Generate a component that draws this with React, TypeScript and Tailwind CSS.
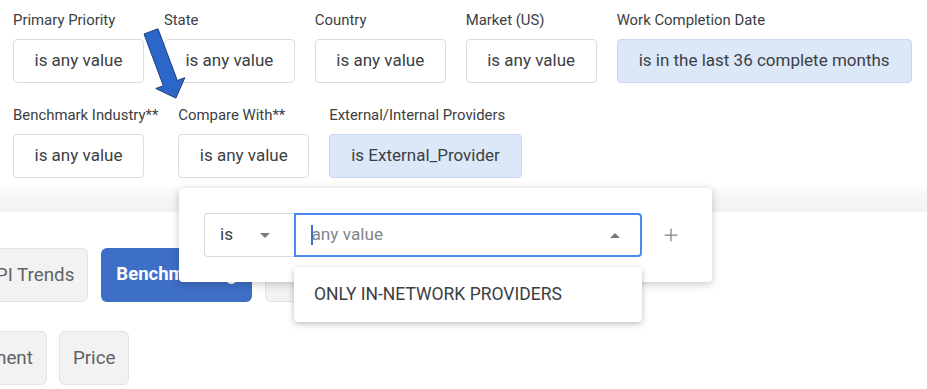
import { Plus } from 'lucide-react'

interface FilterProps {
  label: string
  value: string
  active?: boolean
}

function Filter({ label, value, active = false }: FilterProps): JSX.Element {
  return (
    <div className="flex flex-col items-start">
      <div className="text-[14.9px] leading-[20px] text-[#3c4043] whitespace-nowrap">{label}</div>
      <div
        className={
          active
            ? 'mt-[9px] h-[44px] px-[21px] flex items-center rounded-[4px] border border-[#c8d6ee] bg-[#dce7f8] text-[17px] text-[#3c4043] whitespace-nowrap'
            : 'mt-[9px] h-[44px] px-[20.5px] flex items-center rounded-[4px] border border-[#dadce0] bg-white text-[17px] text-[#3c4043] whitespace-nowrap'
        }
      >
        {value}
      </div>
    </div>
  )
}

function TabButton({ children, active = false }: { children: string; active?: boolean }): JSX.Element {
  return (
    <div
      className={
        active
          ? 'h-[54px] px-[15px] flex items-center rounded-[6px] bg-[#3d6fc7] text-white font-bold text-[18.5px] whitespace-nowrap'
          : 'h-[54px] px-[13px] flex items-center rounded-[6px] border border-[#e2e2e2] bg-[#f2f2f2] text-[#5f6368] text-[18.8px] whitespace-nowrap'
      }
    >
      {children}
    </div>
  )
}

function Caret({ up = false }: { up?: boolean }): JSX.Element {
  return (
    <svg width="10" height="5" viewBox="0 0 10 5">
      {up ? <polygon points="0,5 10,5 5,0" fill="#7a7a7a" /> : <polygon points="0,0 10,0 5,5" fill="#7a7a7a" />}
    </svg>
  )
}

export default function App(): JSX.Element {
  return (
    <div className="relative w-[927px] h-[389px] overflow-hidden bg-white font-[Roboto,sans-serif]">
      {/* filters */}
      <div className="h-[187px] px-[13px] pt-[10px]">
        <div className="flex gap-5">
          <Filter label="Primary Priority" value="is any value" />
          <Filter label="State" value="is any value" />
          <Filter label="Country" value="is any value" />
          <Filter label="Market (US)" value="is any value" />
          <Filter label="Work Completion Date" value="is in the last 36 complete months" active />
        </div>
        <div className="flex gap-5 mt-[22px]">
          <Filter label="Benchmark Industry**" value="is any value" />
          <Filter label="Compare With**" value="is any value" />
          <Filter label="External/Internal Providers" value="is External_Provider" active />
        </div>
      </div>
      <div className="h-[25px] bg-gradient-to-b from-[#fbfbfb] to-[#f1f1f1]" />

      {/* tabs */}
      <div className="pt-[36px]">
        <div className="flex gap-[13px] ml-[-30px]">
          <TabButton>KPI Trends</TabButton>
          <TabButton active>Benchmarking</TabButton>
          <TabButton>Comparison</TabButton>
        </div>
        <div className="flex gap-[12px] ml-[-72px] mt-[29px]">
          <TabButton>Settlement</TabButton>
          <TabButton>Price</TabButton>
        </div>
      </div>

      {/* popup editor */}
      <div className="absolute left-[179px] top-[188px] w-[533px] h-[94px] rounded-[4px] bg-white shadow-[0_2px_8px_rgba(0,0,0,0.22)] px-[25px] pt-[25px]">
        <div className="flex items-center">
          <div className="w-[90px] h-[44px] flex items-center justify-between pl-[15px] pr-[24px] rounded-l-[4px] border border-r-0 border-[#dadce0] text-[17.2px] text-[#3c4043]">
            <span>is</span>
            <Caret />
          </div>
          <div className="relative w-[348px] h-[44px] flex items-center justify-between pl-[15px] pr-[20px] rounded-r-[4px] border-2 border-[#4d87ef] text-[17.2px] text-[#80868b]">
            <span className="flex items-center">
              <span className="w-[1.5px] h-[20px] bg-[#3a6fd8] mr-[-1px]" />
              any value
            </span>
            <Caret up />
          </div>
          <Plus size={20} strokeWidth={1.5} className="ml-[19px] text-[#808080]" />
        </div>
      </div>

      {/* suggestion list */}
      <div className="absolute left-[294px] top-[267px] w-[348px] h-[55px] flex items-center px-[20px] rounded-[4px] bg-white shadow-[0_2px_6px_rgba(0,0,0,0.25)] text-[17.5px] text-[#3c4043]">
        ONLY IN-NETWORK PROVIDERS
      </div>

      {/* annotation arrow */}
      <svg className="absolute left-[140px] top-[24px] pointer-events-none" width="50" height="80" viewBox="0 0 50 80">
        <polygon
          points="4,10 18,4.8 37.3,56.5 44.8,53.7 35.9,74.1 15.8,64.5 23.3,61.7"
          fill="#2b66c8"
          stroke="#1d3f7c"
          strokeWidth="1"
          strokeLinejoin="round"
        />
      </svg>
    </div>
  )
}
